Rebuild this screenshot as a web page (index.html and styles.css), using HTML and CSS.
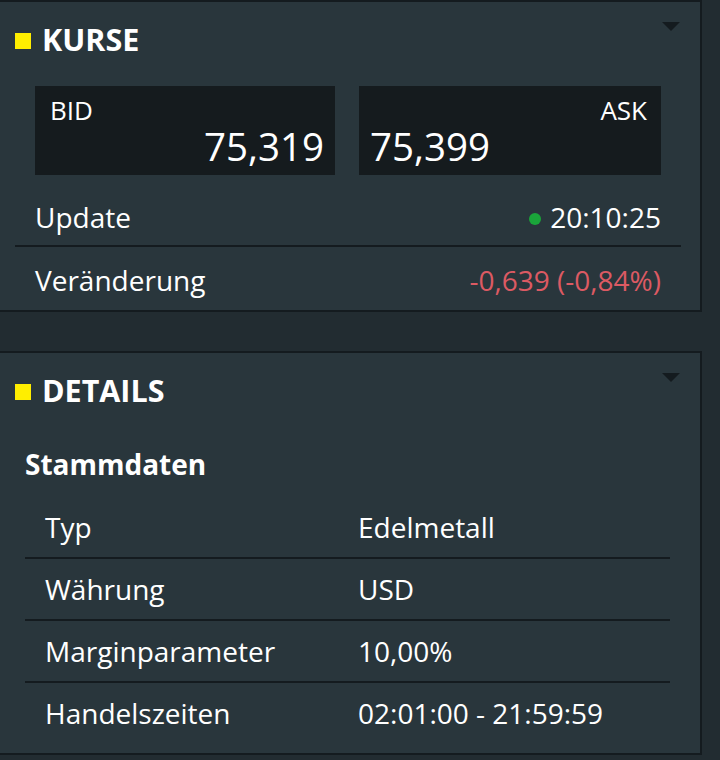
FILE: index.html
```html
<!DOCTYPE html>
<html lang="de">
<head>
<meta charset="utf-8">
<title>Kurse</title>
<link rel="stylesheet" href="styles.css">
</head>
<body>
<section class="panel panel-kurse">
  <header class="panel-head">
    <span class="marker"></span>
    <h2 class="panel-title">KURSE</h2>
    <span class="toggle"></span>
  </header>
  <div class="quotes">
    <div class="quote quote-bid">
      <div class="quote-label">BID</div>
      <div class="quote-value">75,319</div>
    </div>
    <div class="quote quote-ask">
      <div class="quote-label">ASK</div>
      <div class="quote-value">75,399</div>
    </div>
  </div>
  <div class="info-rows">
    <div class="info-row">
      <span class="info-label">Update</span>
      <span class="info-value"><span class="dot"></span>20:10:25</span>
    </div>
    <div class="info-row">
      <span class="info-label">Veränderung</span>
      <span class="info-value negative">-0,639 (-0,84%)</span>
    </div>
  </div>
</section>

<section class="panel panel-details">
  <header class="panel-head">
    <span class="marker"></span>
    <h2 class="panel-title">DETAILS</h2>
    <span class="toggle"></span>
  </header>
  <h3 class="section-title">Stammdaten</h3>
  <div class="detail-table">
    <div class="detail-row"><span>Typ</span><span>Edelmetall</span></div>
    <div class="detail-row"><span>Währung</span><span>USD</span></div>
    <div class="detail-row"><span>Marginparameter</span><span>10,00%</span></div>
    <div class="detail-row"><span>Handelszeiten</span><span>02:01:00 - 21:59:59</span></div>
  </div>
</section>
</body>
</html>
```

FILE: styles.css
```css
html, body {
  margin: 0;
  padding: 0;
}
body {
  background: #222c31;
  font-family: "Open Sans", "Noto Sans", sans-serif;
  color: #ffffff;
  width: 720px;
  height: 760px;
  overflow: hidden;
}
.panel {
  width: 702px;
  background: #29363c;
  border: 2px solid #141b1f;
  border-left: none;
  box-sizing: border-box;
  margin: 0;
}
.panel-kurse {
  height: 312px;
}
.panel-details {
  margin-top: 39px;
  height: 404px;
}
.panel-head {
  height: 74px;
  display: flex;
  align-items: center;
  padding-left: 15px;
  padding-right: 20px;
}
.marker {
  width: 16px;
  height: 16px;
  background: #ffee00;
  margin-right: 11px;
  margin-top: 4px;
  flex: none;
}
.panel-title {
  margin: 0;
  font-size: 30.5px;
  font-weight: 700;
  line-height: 1;
  letter-spacing: 0;
}
.toggle {
  margin-left: auto;
  align-self: flex-start;
  margin-top: 20px;
  width: 0;
  height: 0;
  border-left: 9px solid transparent;
  border-right: 9px solid transparent;
  border-top: 9px solid #141b1f;
}
.quotes {
  display: grid;
  grid-template-columns: 300px 302px;
  column-gap: 24px;
  margin: 10px 0 0 35px;
}
.quote {
  background: #151b1e;
  height: 89px;
  box-sizing: border-box;
  display: flex;
  flex-direction: column;
}
.quote-label {
  font-size: 26px;
  line-height: 1;
  margin-top: 11px;
}
.quote-value {
  font-size: 38.5px;
  line-height: 1;
  margin-top: 4px;
}
.quote-bid {
  padding: 0 11px 0 15px;
}
.quote-bid .quote-value {
  text-align: right;
}
.quote-ask {
  padding: 0 14px 0 11px;
}
.quote-ask .quote-label {
  text-align: right;
}
.info-rows {
  margin: 9px 19px 0 15px;
}
.info-row {
  display: flex;
  justify-content: space-between;
  align-items: center;
  height: 61px;
  padding: 0 20px;
  font-size: 28px;
}
.info-row:first-child {
  padding-top: 4px;
  height: 57px;
}
.info-row + .info-row {
  border-top: 2px solid #141b1f;
}
.info-row + .info-row .info-label,
.info-row + .info-row .info-value {
  position: relative;
  top: 2px;
}
.dot {
  display: inline-block;
  width: 12px;
  height: 12px;
  border-radius: 50%;
  background: #1aa53a;
  margin-right: 9px;
  vertical-align: 3px;
}
.negative {
  color: #dc5a63;
}
.section-title {
  margin: 17px 0 0 25px;
  font-size: 28px;
  font-weight: 700;
  line-height: 40px;
}
.detail-table {
  margin: 13px 30px 0 25px;
}
.detail-row {
  display: grid;
  grid-template-columns: 313px 1fr;
  align-items: center;
  height: 60px;
  padding: 0 20px;
  font-size: 28px;
}
.detail-row + .detail-row {
  border-top: 2px solid #141b1f;
}
```
